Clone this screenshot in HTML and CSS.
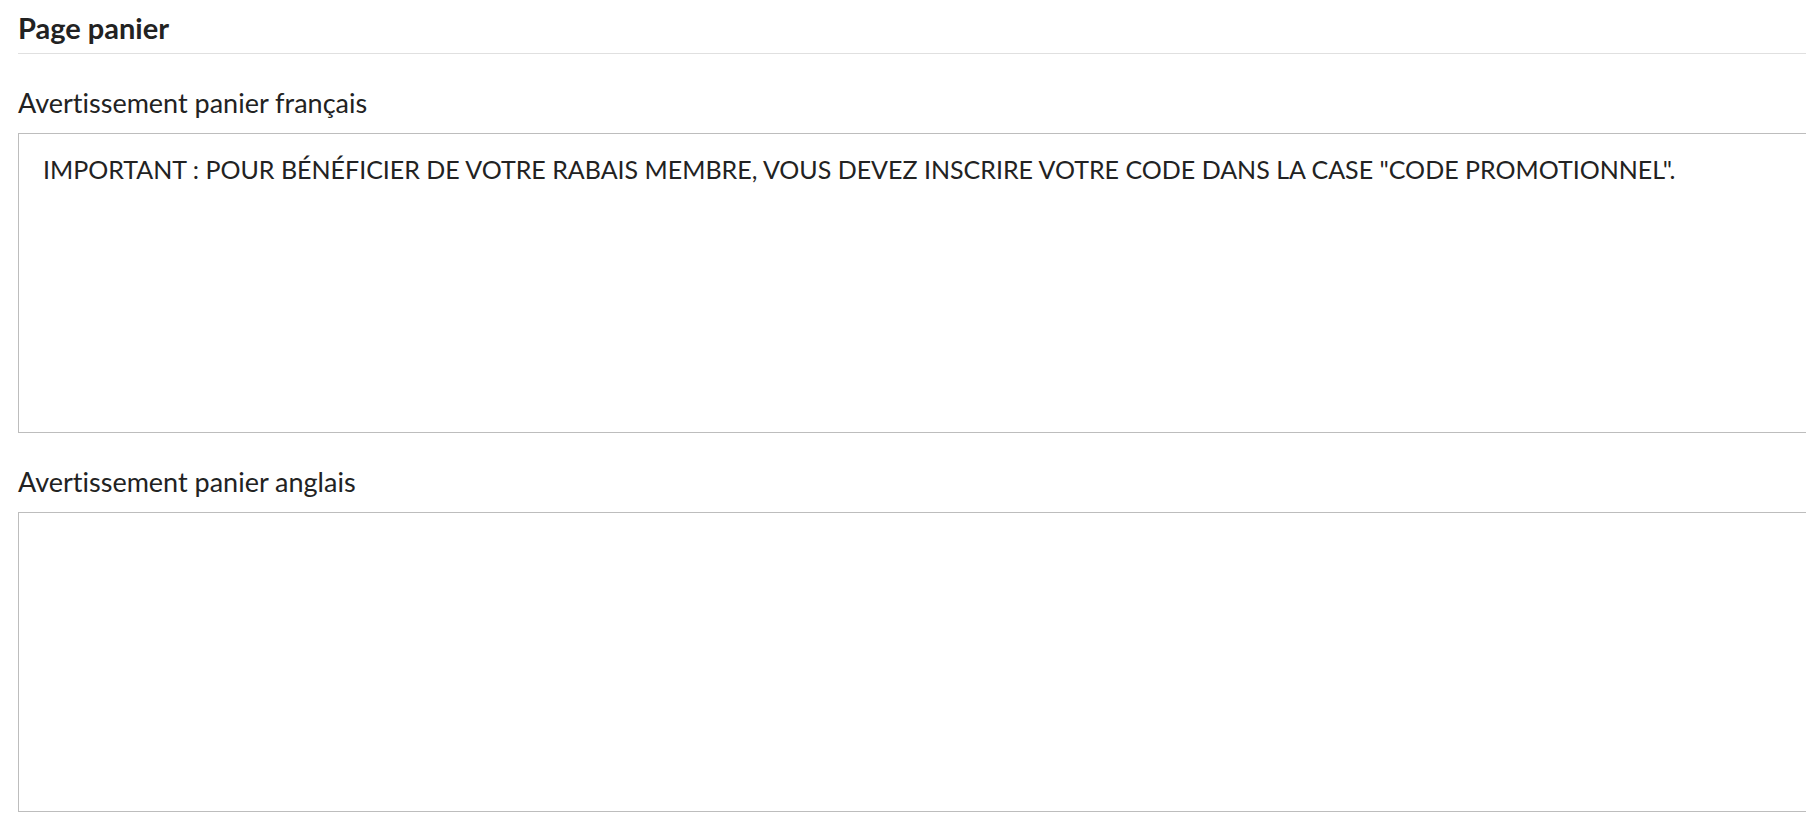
FILE: index.html
```html
<!DOCTYPE html>
<html lang="fr">
<head>
    <meta charset="UTF-8">
    <meta name="viewport" content="width=device-width, initial-scale=1.0">
    <title>Page panier</title>
    <link rel="stylesheet" href="styles.css">
</head>
<body>
    <div class="panel">
        <h2 class="section-title">Page panier</h2>

        <div class="field">
            <label for="warningFr">Avertissement panier français</label>
            <textarea id="warningFr">IMPORTANT : POUR BÉNÉFICIER DE VOTRE RABAIS MEMBRE, VOUS DEVEZ INSCRIRE VOTRE CODE DANS LA CASE "CODE PROMOTIONNEL".</textarea>
        </div>

        <div class="field">
            <label for="warningEn">Avertissement panier anglais</label>
            <textarea id="warningEn"></textarea>
        </div>
    </div>
</body>
</html>
```

FILE: styles.css
```css
html, body {
    overflow: hidden;
}

body {
    margin: 0;
    font-family: Lato, "Open Sans", sans-serif;
    font-variant-ligatures: no-common-ligatures;
    color: #222;
    background-color: #fff;
}

.panel {
    width: calc(100% + 40px);
    padding: 11px 0 0 18px;
}

.section-title {
    margin: 0;
    padding-bottom: 7px;
    font-size: 29px;
    font-weight: bold;
    line-height: 1.2;
    border-bottom: 1px solid #e0e0e0;
}

.field {
    margin-top: 33px;
}

.field label {
    display: block;
    font-size: 27px;
    line-height: 32px;
    margin-bottom: 14px;
}

.field textarea {
    display: block;
    box-sizing: border-box;
    width: 100%;
    height: 300px;
    margin: 0;
    padding: 17px 24px 16px;
    font-family: Lato, "Open Sans", sans-serif;
    font-variant-ligatures: no-common-ligatures;
    font-size: 25px;
    line-height: 1.5;
    color: #222;
    border: 1px solid #bdbdbd;
    border-radius: 0;
    resize: none;
    outline: none;
}
```
